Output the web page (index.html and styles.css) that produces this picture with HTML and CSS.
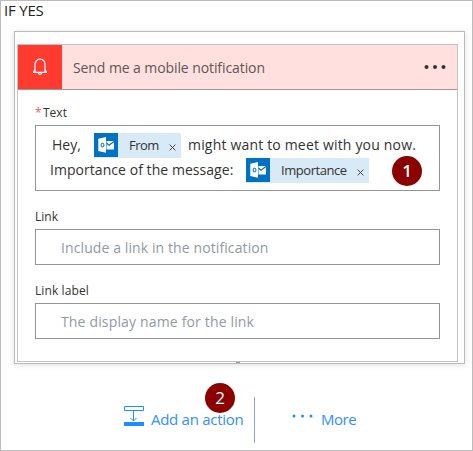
FILE: index.html
```html
<!DOCTYPE html>
<html lang="en">
<head>
<meta charset="utf-8">
<title>If yes</title>
<link rel="stylesheet" href="styles.css">
</head>
<body>
<svg width="0" height="0" class="defs">
  <symbol id="outlook" viewBox="0 0 24 24">
    <path d="M12.500 8H20v8.500h-7.500z" fill="#fff"/>
    <path d="M12.500 10l2.500 2.300L20 8.500" fill="none" stroke="#0072c6" stroke-width="1.200"/>
    <path d="M4.300 5.800l7.700-1.800v15.800L4.300 18z" fill="#fff"/>
    <ellipse cx="8.500" cy="12" rx="1.400" ry="1.900" fill="none" stroke="#3b8fd0" stroke-width="1.300"/>
  </symbol>
</svg>
<main class="branch">
  <h1 class="branch-title"><span>IF YES</span></h1>
  <section class="outer">
    <div class="card">
      <header class="card-header">
        <div class="bell">
          <svg width="16" height="18" viewBox="0 0 16 18" fill="none" stroke="#fff" stroke-width="1.200">
            <path d="M1 14.400h14M3 14V7c0-3.500 2-5.800 5-5.800S13 3.500 13 7v7M3 11.500L1.300 14.300M13 11.500l1.700 2.800M6.300 14.600c0 2.300 3.400 2.300 3.400 0"/>
          </svg>
        </div>
        <h2 class="card-title"><span>Send me a mobile notification</span></h2>
        <svg class="menu" width="22" height="6" viewBox="0 0 22 6" fill="#333"><circle cx="2.500" cy="3" r="2"/><circle cx="11" cy="3" r="2"/><circle cx="19.500" cy="3" r="2"/></svg>
      </header>
      <div class="fields">
        <div class="label"><i class="required">*</i><span>Text</span></div>
        <div class="editor">
          <div class="line first">
            <span class="hey">Hey,</span>
            <span class="token from"><svg class="logo" width="24" height="24"><use href="#outlook"/></svg><span class="name">From</span><svg class="x" width="7" height="7" viewBox="0 0 7 7"><path d="M.6.6l5.800 5.800M6.400.6L.6 6.400" stroke="#444"/></svg></span>
            <span class="might">might want to meet with you now.</span>
          </div>
          <div class="line second">
            <span class="imp">Importance of the message:</span>
            <span class="token importance"><svg class="logo" width="24" height="24"><use href="#outlook"/></svg><span class="name">Importance</span><svg class="x" width="7" height="7" viewBox="0 0 7 7"><path d="M.6.6l5.800 5.800M6.400.6L.6 6.400" stroke="#444"/></svg></span>
          </div>
          <b class="badge one">1</b>
        </div>
        <div class="label"><span class="l-link">Link</span></div>
        <div class="input"><span class="p-link">Include a link in the notification</span></div>
        <div class="label"><span class="l-name">Link label</span></div>
        <div class="input"><span class="p-name">The display name for the link</span></div>
      </div>
    </div>
    <i class="tick"></i>
  </section>
  <footer class="actions">
    <div class="add">
      <svg width="20" height="20" viewBox="0 0 20 20" fill="none" stroke="#1b8fff"><path d="M.5.500h19v4H.5z"/><path d="M9.500 5v10M6.500 12l3 3 3-3"/><path d="M0 16h20v4H0z" fill="#1b8fff" stroke="none"/></svg>
      <span class="add-text">Add an action</span>
      <b class="badge two">2</b>
    </div>
    <div class="more">
      <svg width="22" height="4" viewBox="0 0 22 4" fill="#1b8fff"><circle cx="2" cy="2" r="1.500"/><circle cx="10.500" cy="2" r="1.500"/><circle cx="19" cy="2" r="1.500"/></svg>
      <span class="more-text">More</span>
    </div>
  </footer>
</main>
</body>
</html>
```
FILE: styles.css
```css
* { box-sizing: border-box; }
body { margin: 0; background: #fff; font-family: "Open Sans", "Noto Sans", sans-serif; color: #333; }
h1, h2 { margin: 0; font-weight: 400; }
svg { display: block; flex: none; }
.defs { position: absolute; }
span { white-space: nowrap; }
.branch { width: 473px; height: 451px; border: 1px solid #bcbcbc; overflow: hidden; }
.branch-title { height: 30px; padding-left: 3px; font-size: 15px; line-height: 19px; color: #222; letter-spacing: -.2px; }
.outer { width: 451px; height: 333px; margin-left: 13px; padding: 12px 0 0 2px; border: 1px solid #bababa; box-shadow: 0 1px 6px rgba(0,0,0,.13); }
.card { width: 441px; height: 318px; border: 1px solid #c3c3c3; background: #fff; }
.card-header { display: flex; align-items: center; height: 45px; background: #ffe0de; border-bottom: 1px solid #999; }
.bell { display: flex; align-items: center; justify-content: center; width: 44px; height: 44px; background: #ff3b30; }
.card-title { margin-left: 11px; width: 351px; padding-top: 2px; font-size: 14px; line-height: 20px; color: #5d5656; letter-spacing: -.09px; }
.menu { margin-top: -1px; }
.fields { padding: 12px 0 0 17px; }
.label { display: flex; height: 23px; font-size: 12px; line-height: 22px; }
.l-link, .l-name { margin-top: -1px; }
.l-name { letter-spacing: .1px; }
.required { width: 8px; font-style: normal; color: #ef5b58; }
.editor { position: relative; width: 405px; height: 66px; margin-bottom: 16px; padding-top: 7px; border: 1px solid #949494; font-size: 14px; }
.line { display: flex; height: 25px; line-height: 24px; }
.first { padding-left: 16px; }
.second { padding-left: 14px; }
.hey { width: 42px; }
.might { margin-left: -1px; letter-spacing: .18px; }
.imp { width: 196px; letter-spacing: .05px; }
.token { display: flex; height: 25px; background: #d8eaf6; font-size: 13px; }
.logo { background: #0072c6; }
.x { margin: 11px 0 0 auto; }
.from { width: 87px; margin-right: 8px; padding-right: 5px; }
.from .name { margin-left: 11px; letter-spacing: -.5px; }
.importance { width: 123px; padding-right: 5px; }
.importance .name { margin-left: 11px; letter-spacing: -.45px; }
.badge { position: absolute; width: 30px; height: 30px; border-radius: 50%; background: #8b0000; color: #fff; font-size: 17px; font-weight: 400; line-height: 29px; text-align: center; }
.one { left: 356px; top: 30px; font-weight: 600; }
.two { left: 81px; top: -14px; }
.input { width: 405px; height: 36px; margin: -1px 0 16px; padding-left: 25px; border: 1px solid #949494; font-size: 14px; line-height: 35px; color: #919aa3; }
.p-link { letter-spacing: .1px; }
.p-name { letter-spacing: .16px; }
.tick { display: block; width: 4px; height: 1px; margin: 0 0 0 219px; background: #999; }
.actions { display: flex; height: 46px; margin: 33px 0 0 123px; color: #3290fa; font-size: 15px; }
.add { position: relative; display: flex; width: 131px; padding-top: 9px; border-right: 1px solid #8aa6ee; }
.add-text { margin: 3px 0 0 7px; line-height: 20px; letter-spacing: -.28px; }
.more { display: flex; padding: 17px 0 0 37px; }
.more-text { margin: -5px 0 0 7px; line-height: 20px; letter-spacing: -.5px; }
```
